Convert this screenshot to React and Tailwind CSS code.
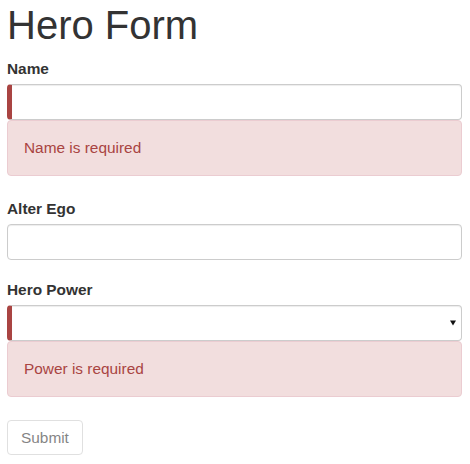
import React from 'react';

const font = { fontFamily: '"Liberation Sans", Arial, sans-serif' };

const Label = ({ children, htmlFor }) => (
  <label htmlFor={htmlFor} className="block text-[15.4px] leading-[21px] font-bold text-[#333] mb-[5px]">
    {children}
  </label>
);

const inputBase =
  'block w-full h-[36px] bg-white border border-[#ccc] rounded-[4px] shadow-[inset_0_1px_1px_rgba(0,0,0,0.075)] px-3 text-[15px] text-[#555] outline-none';

const Alert = ({ children }) => (
  <div className="bg-[#f2dede] border border-[#ebccd1] rounded-[4px] text-[#a94442] text-[15.4px] leading-[22px] py-4 px-4">
    {children}
  </div>
);

export default function App() {
  return (
    <div className="min-h-screen bg-white pl-[7px] pr-[8px]" style={font}>
      <h1 className="mt-[3px] mb-[11px] text-[40px] leading-[44px] font-normal text-[#333]">Hero Form</h1>
      <form onSubmit={(e) => e.preventDefault()}>
        <div className="mb-[22px]">
          <Label htmlFor="name">Name</Label>
          <input id="name" type="text" className={`${inputBase} border-l-[5px] border-l-[#a94442]`} />
          <Alert>Name is required</Alert>
        </div>

        <div className="mb-[19px]">
          <Label htmlFor="alterEgo">Alter Ego</Label>
          <input id="alterEgo" type="text" className={inputBase} />
        </div>

        <div className="mb-[23px]">
          <Label htmlFor="power">Hero Power</Label>
          <div className="relative">
            <select
              id="power"
              className={`${inputBase} appearance-none border-l-[5px] border-l-[#a94442]`}
              defaultValue=""
            >
              <option value=""></option>
              <option>Really Smart</option>
              <option>Super Flexible</option>
              <option>Super Hot</option>
              <option>Weather Changer</option>
            </select>
            <svg
              className="absolute right-[6px] top-[15px] pointer-events-none"
              width="6"
              height="6"
              viewBox="0 0 6 6"
            >
              <path d="M0 0.5 H6 L3 5.5 Z" fill="#111" />
            </svg>
          </div>
          <Alert>Power is required</Alert>
        </div>

        <button
          type="submit"
          disabled
          className="h-[35px] px-[13px] bg-white border border-[#ccc] rounded-[4px] text-[15.4px] text-[#333] opacity-60 cursor-not-allowed"
        >
          Submit
        </button>
      </form>
    </div>
  );
}
